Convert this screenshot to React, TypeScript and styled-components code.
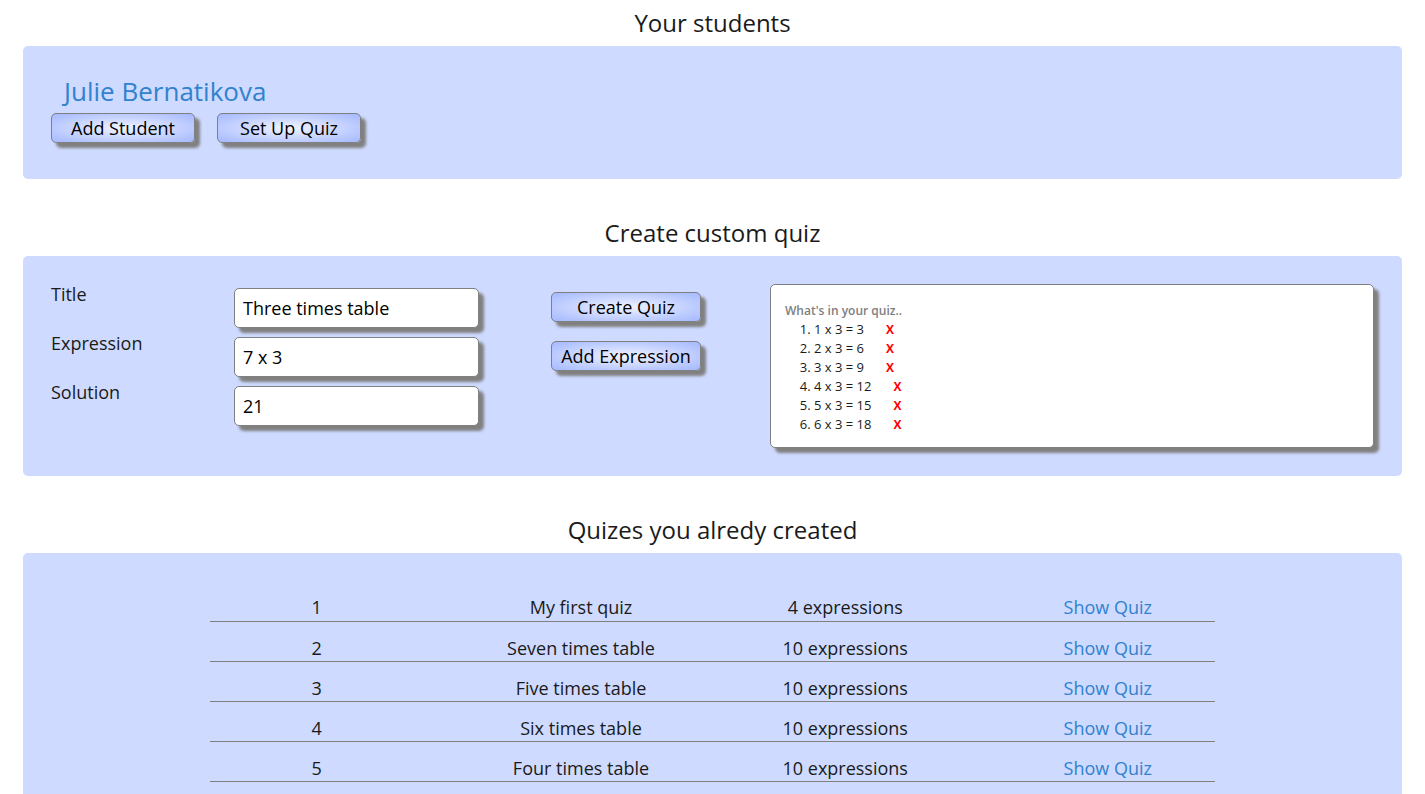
import React from "react";
import styled, { createGlobalStyle } from "styled-components";

const GlobalStyle = createGlobalStyle`
  * { box-sizing: border-box; }
  html { scrollbar-width: none; }
  body {
    margin: 0;
    background: #ffffff;
    color: #1a1a1a;
    font-family: "Open Sans", "Noto Sans", sans-serif;
    font-size: 18px;
    line-height: 24px;
  }
`;

const Page = styled.main`
  display: flex;
  flex-direction: column;
  gap: 33px;
  padding: 2px 23px 33px;
`;

const Heading = styled.h2`
  margin: 0;
  padding-bottom: 2px;
  font-size: 24px;
  line-height: 42px;
  font-weight: 500;
  text-align: center;
`;

const Panel = styled.div`
  padding: 28px;
  border-radius: 5px;
  background: #cedaff;
`;

const StudentLink = styled.a`
  display: block;
  width: fit-content;
  margin-bottom: 5px;
  padding-left: 13px;
  font-size: 26px;
  line-height: 34px;
  font-weight: 500;
  color: #3182ce;
  text-decoration: none;
`;

const ButtonBar = styled.div`
  display: flex;
  gap: 22px;
  padding-bottom: 8px;
`;

const Button = styled.button<{ $width: number }>`
  width: ${(p) => p.$width}px;
  height: 30px;
  padding: 0;
  border: 1px solid gray;
  border-radius: 5px;
  background: radial-gradient(#f0f3ff, #a3b8ff);
  box-shadow: 5px 5px 3px gray;
  color: #000000;
  font-family: inherit;
  font-size: 18px;
  line-height: 28px;
  font-weight: 500;
  white-space: nowrap;
  cursor: pointer;
`;

const Builder = styled.div`
  display: grid;
  grid-template-columns: 719fr 604fr;
  align-items: start;
`;

const Form = styled.form`
  display: grid;
  grid-template-columns: 183fr 317fr 219fr;
  grid-auto-rows: 48px;
  row-gap: 1px;
`;

const Label = styled.label`
  grid-column: 1;
  line-height: 20px;
`;

const Input = styled.input`
  width: 245px;
  max-width: 100%;
  height: 40px;
  margin-top: 4px;
  padding: 0 8px;
  border: 1px solid gray;
  border-radius: 5px;
  background: #ffffff;
  box-shadow: 5px 5px 3px gray;
  color: #000000;
  font-family: inherit;
  font-size: 18px;
  font-weight: 500;
`;

const Action = styled.div`
  padding-top: 8px;
`;

const Preview = styled.section`
  padding: 16px 14px 13px;
  border: 1px solid gray;
  border-radius: 5px;
  background: #ffffff;
  box-shadow: 5px 5px 3px gray;
  font-size: 13px;
  line-height: 19px;
`;

const PreviewTitle = styled.p`
  margin: 0;
  color: gray;
  font-size: 12px;
  font-weight: 600;
`;

const ExpressionList = styled.ol`
  margin: 0;
  padding-left: 29px;
`;

const Remove = styled.button`
  margin-left: 22px;
  padding: 0;
  border: 0;
  background: none;
  color: #ff0000;
  font-family: inherit;
  font-size: 12px;
  line-height: 16px;
  font-weight: 700;
  cursor: pointer;
`;

const QuizTable = styled.table`
  width: 76%;
  margin: 0 auto;
  table-layout: fixed;
  border-collapse: collapse;
`;

const Column = styled.col<{ $width?: number }>`
  width: ${(p) => (p.$width ? `${p.$width}px` : "auto")};
`;

const Cell = styled.td<{ $indent?: boolean }>`
  height: 40px;
  padding: 14px 0 1px ${(p) => (p.$indent ? "48px" : "0")};
  border-bottom: 1px solid gray;
  text-align: center;
`;

const QuizLink = styled.a`
  color: #3182ce;
  font-weight: 500;
  text-decoration: none;
`;

const expressions = ["1 x 3 = 3", "2 x 3 = 6", "3 x 3 = 9", "4 x 3 = 12", "5 x 3 = 15", "6 x 3 = 18"];

const quizzes = [
  { title: "My first quiz", count: 4 },
  { title: "Seven times table", count: 10 },
  { title: "Five times table", count: 10 },
  { title: "Six times table", count: 10 },
  { title: "Four times table", count: 10 },
];

export default function App() {
  return (
    <>
      <GlobalStyle />
      <Page>
        <section>
          <Heading>Your students</Heading>
          <Panel>
            <StudentLink href="#student">Julie Bernatikova</StudentLink>
            <ButtonBar>
              <Button type="button" $width={144}>Add Student</Button>
              <Button type="button" $width={144}>Set Up Quiz</Button>
            </ButtonBar>
          </Panel>
        </section>

        <section>
          <Heading>Create custom quiz</Heading>
          <Panel>
            <Builder>
              <Form onSubmit={(e) => e.preventDefault()}>
                <Label htmlFor="title">Title</Label>
                <Input id="title" defaultValue="Three times table" />
                <Action>
                  <Button type="submit" $width={150}>Create Quiz</Button>
                </Action>
                <Label htmlFor="expression">Expression</Label>
                <Input id="expression" defaultValue="7 x 3" />
                <Action>
                  <Button type="button" $width={150}>Add Expression</Button>
                </Action>
                <Label htmlFor="solution">Solution</Label>
                <Input id="solution" defaultValue="21" />
              </Form>
              <Preview>
                <PreviewTitle>What's in your quiz..</PreviewTitle>
                <ExpressionList>
                  {expressions.map((text) => (
                    <li key={text}>
                      {text}
                      <Remove type="button" aria-label={`Remove ${text}`}>X</Remove>
                    </li>
                  ))}
                </ExpressionList>
              </Preview>
            </Builder>
          </Panel>
        </section>

        <section>
          <Heading>Quizes you alredy created</Heading>
          <Panel>
            <QuizTable>
              <colgroup>
                <Column $width={214} />
                <Column />
                <Column $width={214} />
                <Column $width={263} />
              </colgroup>
              <tbody>
                {quizzes.map((quiz, i) => (
                  <tr key={quiz.title}>
                    <Cell>{i + 1}</Cell>
                    <Cell>{quiz.title}</Cell>
                    <Cell>{quiz.count} expressions</Cell>
                    <Cell $indent>
                      <QuizLink href="#quiz">Show Quiz</QuizLink>
                    </Cell>
                  </tr>
                ))}
              </tbody>
            </QuizTable>
          </Panel>
        </section>
      </Page>
    </>
  );
}
